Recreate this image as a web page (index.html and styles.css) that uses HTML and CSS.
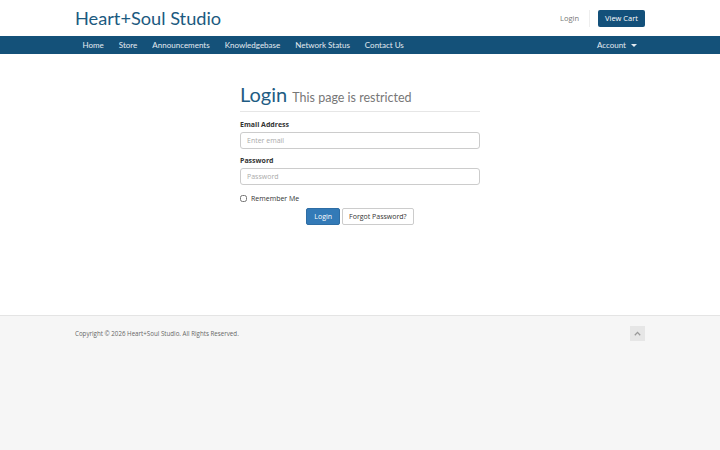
FILE: index.html
```html
<!DOCTYPE html>
<html lang="en">
<head>
    <meta charset="UTF-8">
    <meta name="viewport" content="width=device-width, initial-scale=1.0">
    <title>Login - Heart+Soul Studio</title>
    <link rel="stylesheet" href="styles.css">
</head>
<body>
    <!-- Header -->
    <header class="header">
        <div class="container header-inner">
            <a class="logo" href="#">Heart+Soul Studio</a>
            <div class="header-actions">
                <a class="header-login" href="#">Login</a>
                <span class="header-sep"></span>
                <a class="btn-cart" href="#">View Cart</a>
            </div>
        </div>
    </header>

    <!-- Main navigation -->
    <nav class="main-nav">
        <div class="container nav-inner">
            <ul class="nav-links">
                <li><a href="#">Home</a></li>
                <li><a href="#">Store</a></li>
                <li><a href="#">Announcements</a></li>
                <li><a href="#">Knowledgebase</a></li>
                <li><a href="#">Network Status</a></li>
                <li><a href="#">Contact Us</a></li>
            </ul>
            <a class="nav-account" href="#">Account <span class="caret"></span></a>
        </div>
    </nav>

    <!-- Login form -->
    <main class="main">
        <div class="login-box">
            <h1 class="page-title">Login <small>This page is restricted</small></h1>
            <form class="login-form">
                <div class="form-group">
                    <label for="email">Email Address</label>
                    <input type="email" id="email" placeholder="Enter email">
                </div>
                <div class="form-group">
                    <label for="password">Password</label>
                    <input type="password" id="password" placeholder="Password">
                </div>
                <label class="remember"><input type="checkbox"> Remember Me</label>
                <div class="form-buttons">
                    <button type="button" class="btn btn-primary">Login</button>
                    <button type="button" class="btn btn-default">Forgot Password?</button>
                </div>
            </form>
        </div>
    </main>

    <!-- Footer -->
    <footer class="footer">
        <div class="container footer-inner">
            <p>Copyright &copy; 2026 Heart+Soul Studio. All Rights Reserved.</p>
            <a class="back-to-top" href="#">
                <svg width="7" height="5" viewBox="0 0 7 5"><path d="M0.8 4.2 L3.5 1.4 L6.2 4.2" fill="none" stroke="#999" stroke-width="1.3"/></svg>
            </a>
        </div>
    </footer>
</body>
</html>
```

FILE: styles.css
```css
body {
    font-family: 'Open Sans', 'Noto Sans', sans-serif;
    margin: 0;
    padding: 0;
    background-color: #f6f6f6;
    color: #333;
}
a {
    text-decoration: none;
}
.container {
    width: 570px;
    margin: 0 auto;
}

/* Header */
.header {
    background: white;
    height: 36px;
}
.header-inner {
    display: flex;
    align-items: center;
    justify-content: space-between;
    height: 36px;
}
.logo {
    font-family: Lato, sans-serif;
    font-size: 18.2px;
    color: #1b5a80;
}
.header-actions {
    display: flex;
    align-items: center;
}
.header-login {
    font-size: 7.5px;
    color: #777;
}
.header-sep {
    width: 1px;
    height: 17px;
    background: #eee;
    margin: 0 8px 0 10px;
}
.btn-cart {
    background: #13507a;
    color: white;
    font-size: 7.5px;
    padding: 0 7px;
    height: 17px;
    line-height: 17px;
    border-radius: 2px;
}

/* Navigation */
.main-nav {
    background: #145179;
    height: 18px;
}
.nav-inner {
    display: flex;
    justify-content: space-between;
    align-items: center;
    height: 18px;
}
.nav-links {
    list-style: none;
    margin: 0;
    padding: 0;
    display: flex;
}
.nav-links a, .nav-account {
    font-family: Lato, sans-serif;
    font-size: 8px;
    color: #e4ebf1;
    display: block;
    padding: 0 7.5px;
    line-height: 18px;
}
.nav-account {
    padding-right: 8px;
}
.caret {
    display: inline-block;
    width: 0;
    height: 0;
    margin-left: 3px;
    vertical-align: middle;
    border-top: 3px solid #e4ebf1;
    border-left: 3px solid transparent;
    border-right: 3px solid transparent;
}

/* Main */
.main {
    background: white;
    height: 262px;
    padding-top: 1px;
    box-sizing: border-box;
    border-bottom: 1px solid #e4e4e4;
}
.login-box {
    width: 240px;
    margin: 27px auto 0;
}
.page-title {
    font-family: Lato, sans-serif;
    font-weight: normal;
    font-size: 20px;
    color: #1e5c83;
    margin: 0 0 7px;
    padding-bottom: 1px;
    border-bottom: 1px solid #e6e6e6;
    line-height: 24px;
}
.page-title small {
    font-size: 12.5px;
    color: #777;
}
.form-group {
    margin-bottom: 6px;
}
.form-group label {
    display: block;
    font-size: 7px;
    font-weight: bold;
    margin-bottom: 2px;
    line-height: 11px;
}
.form-group input {
    display: block;
    width: 100%;
    box-sizing: border-box;
    height: 17px;
    border: 1px solid #ccc;
    border-radius: 3px;
    padding: 0 6px;
    font-family: 'Open Sans', sans-serif;
    font-size: 7px;
    color: #555;
    outline: none;
}
.form-group input::placeholder {
    color: #aaa;
}
.remember {
    display: flex;
    align-items: center;
    font-size: 7px;
    margin-top: 9px;
}
.remember input {
    width: 7px;
    height: 7px;
    margin: 0 4px 0 0;
}
.form-buttons {
    display: flex;
    justify-content: center;
    gap: 2px;
    margin-top: 5px;
}
.btn {
    font-family: 'Open Sans', sans-serif;
    font-size: 7px;
    height: 17px;
    padding: 0 6px;
    border-radius: 2px;
    cursor: pointer;
}
.btn-primary {
    background: #337ab7;
    color: white;
    border: 1px solid #2e6da4;
    padding: 0 7px;
}
.btn-default {
    background: white;
    color: #333;
    border: 1px solid #ccc;
}

/* Footer */
.footer {
    background: #f6f6f6;
}
.footer-inner {
    display: flex;
    justify-content: space-between;
    align-items: center;
    padding-top: 10px;
}
.footer p {
    font-size: 6.2px;
    color: #666;
    margin: 0;
}
.back-to-top {
    width: 15px;
    height: 15px;
    background: #e6e6e6;
    display: flex;
    align-items: center;
    justify-content: center;
}
```
